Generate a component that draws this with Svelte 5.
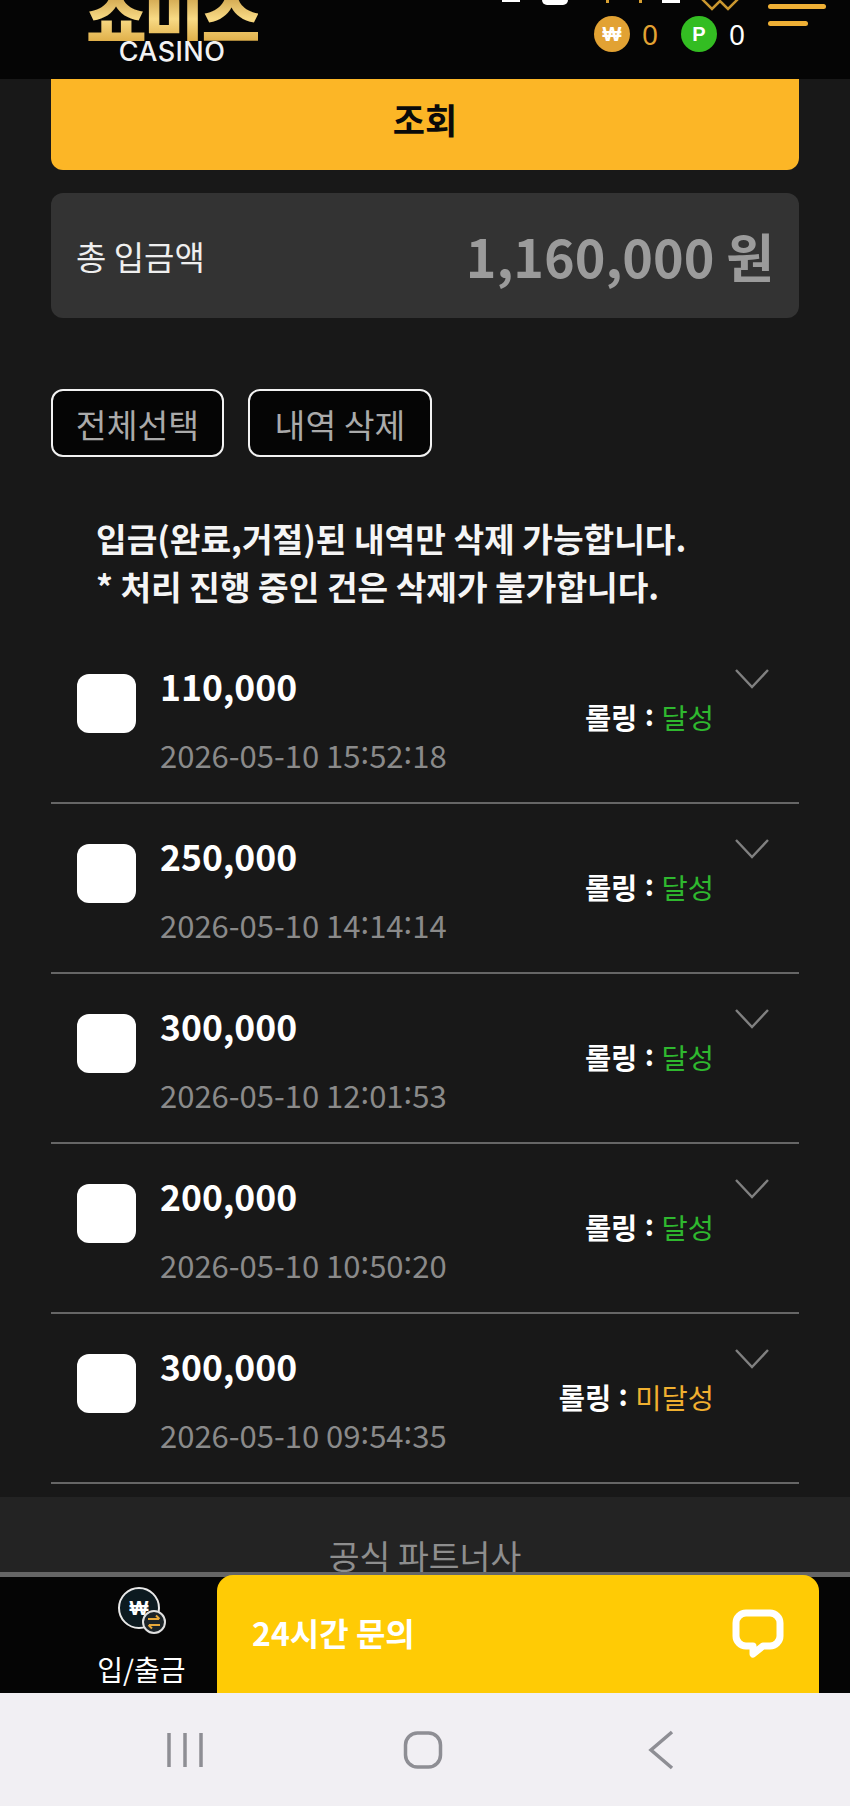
<script>
  const rows = [
    { amount: '110,000', date: ['2026-05-10 15', '52', '18'], status: '달성', done: true },
    { amount: '250,000', date: ['2026-05-10 14', '14', '14'], status: '달성', done: true },
    { amount: '300,000', date: ['2026-05-10 12', '01', '53'], status: '달성', done: true },
    { amount: '200,000', date: ['2026-05-10 10', '50', '20'], status: '달성', done: true },
    { amount: '300,000', date: ['2026-05-10 09', '54', '35'], status: '미달성', done: false }
  ];
</script>

<div class="page">
  <header class="header">
    <div class="logo">
      <div class="logo-mark">쇼미스</div>
      <div class="logo-sub">CASINO</div>
    </div>
    <div class="balances">
      <div class="clipped">
        <span class="clip-box"></span>
        <span class="clip-dot"></span>
        <span class="clip-tick"></span>
        <span class="clip-tick"></span>
        <span class="clip-box small"></span>
        <svg class="crown" width="40" height="12" viewBox="0 0 40 12"><path d="M2 0l10 10 8-8 8 8 10-10" fill="none" stroke="#c9962f" stroke-width="2.5"/></svg>
      </div>
      <div class="coins">
        <span class="coin won">₩</span><span class="num gold">0</span>
        <span class="coin point">P</span><span class="num">0</span>
      </div>
    </div>
    <div class="burger"><i class="long"></i><i class="short"></i></div>
  </header>

  <main class="main">
    <button class="search">조회</button>
    <section class="total">
      <span class="total-label">총 입금액</span>
      <span class="total-value">1,160,000 원</span>
    </section>
    <div class="actions">
      <button class="outline first">전체선택</button>
      <button class="outline second">내역 삭제</button>
    </div>
    <p class="note">입금(완료,거절)된 내역만 삭제 가능합니다.<br />* 처리 진행 중인 건은 삭제가 불가합니다.</p>
    <ul class="list">
      {#each rows as r}
        <li class="row">
          <span class="check"></span>
          <div class="info">
            <div class="amount">{r.amount}</div>
            <div class="date">{r.date[0]}<span class="colon">:</span>{r.date[1]}<span class="colon">:</span>{r.date[2]}</div>
          </div>
          <div class="roll">롤링 <span class="sep">:</span> <span class:ok={r.done} class:no={!r.done}>{r.status}</span></div>
          <svg class="chev" width="34" height="20" viewBox="0 0 34 20"><path d="M1 1l16 17L33 1" fill="none" stroke="#808080" stroke-width="2.4"/></svg>
        </li>
      {/each}
    </ul>
  </main>

  <section class="partner"><span>공식 파트너사</span></section>

  <nav class="bottom">
    <div class="bank">
      <svg width="50" height="50" viewBox="0 0 50 50">
        <circle cx="22" cy="22" r="20" fill="#0c1a20" stroke="#e8e8e8" stroke-width="2"/>
        <text x="22" y="29" text-anchor="middle" font-size="20" font-weight="700" fill="#fff" font-family="Liberation Sans">₩</text>
        <circle cx="37" cy="36" r="11" fill="#1c2428" stroke="#e0e0e0" stroke-width="2"/>
        <path d="M31 33h11M39 29.5l3.5 3.5M43 39H32M35 42.5L31.5 39" fill="none" stroke="#e8a93a" stroke-width="2"/>
      </svg>
      <span>입/출금</span>
    </div>
    <div class="contact">
      <span>24시간 문의</span>
      <svg width="52" height="50" viewBox="0 0 52 50"><path d="M14 4h24a10 10 0 0 1 10 10v13a10 10 0 0 1-10 10H31l-10 8v-8h-7A10 10 0 0 1 4 27V14A10 10 0 0 1 14 4z" fill="none" stroke="#fff" stroke-width="7" stroke-linejoin="round"/></svg>
    </div>
  </nav>

  <div class="system">
    <svg width="36" height="36" viewBox="0 0 36 36"><path d="M2 1v34M18 1v34M34 1v34" stroke="#8e8e94" stroke-width="3.5" fill="none"/></svg>
    <svg class="home" width="40" height="38" viewBox="0 0 40 38"><rect x="2.5" y="2" width="35" height="34" rx="12" fill="none" stroke="#8e8e94" stroke-width="3.5"/></svg>
    <svg width="28" height="40" viewBox="0 0 28 40"><path d="M25 2L4 20l21 18" stroke="#8e8e94" stroke-width="3.5" fill="none"/></svg>
  </div>
</div>

<style>
  :global(body) {
    margin: 0;
    background: #181818;
  }
  .page {
    width: 850px;
    height: 1806px;
    display: flex;
    flex-direction: column;
    overflow: hidden;
    background: #181818;
    font-family: "Noto Sans CJK KR", "Noto Sans", sans-serif;
    color: #fff;
  }
  button {
    font-family: inherit;
    cursor: pointer;
  }
  .header {
    height: 79px;
    flex: none;
    background: #050505;
    display: flex;
    position: relative;
    overflow: hidden;
  }
  .logo {
    position: absolute;
    left: 86px;
    bottom: 16px;
    width: 172px;
    text-align: center;
  }
  .logo-mark {
    font-size: 66px;
    font-weight: 900;
    line-height: 58px;
    letter-spacing: -3px;
    background: linear-gradient(180deg, #b8862c 0%, #f8da85 62%, #e0b04a 100%);
    -webkit-background-clip: text;
    background-clip: text;
    color: transparent;
    white-space: nowrap;
  }
  .logo-sub {
    font-family: Inter, sans-serif;
    font-size: 27px;
    font-weight: 500;
    letter-spacing: 0.4px;
    line-height: 22px;
    color: #f2f2f2;
  }
  .balances {
    position: absolute;
    left: 502px;
    top: 0;
    width: 250px;
  }
  .clipped {
    height: 16px;
    position: relative;
  }
  .clipped span, .crown {
    position: absolute;
    top: 0;
  }
  .clip-box {
    left: 0;
    width: 18px;
    height: 2px;
    background: #fff;
  }
  .clip-box.small {
    left: 160px;
    width: 18px;
    height: 3px;
  }
  .clip-dot {
    left: 40px;
    width: 26px;
    height: 5px;
    border-radius: 0 0 13px 13px;
    background: #fff;
  }
  .clip-tick {
    left: 104px;
    width: 3px;
    height: 3px;
    background: #d8a032;
  }
  .clip-tick + .clip-tick {
    left: 137px;
  }
  .crown {
    left: 198px;
    top: -1px;
  }
  .coins {
    display: flex;
    align-items: center;
    padding-left: 92px;
  }
  .coin {
    width: 36px;
    height: 36px;
    border-radius: 50%;
    display: flex;
    align-items: center;
    justify-content: center;
    font-size: 20px;
    font-weight: 700;
    font-family: "Liberation Sans", sans-serif;
    color: #fff;
  }
  .won {
    background: #e2a233;
  }
  .point {
    background: #33bd22;
    margin-left: 23px;
  }
  .num {
    font-size: 28px;
    line-height: 36px;
    margin-left: 12px;
    color: #fff;
    font-family: "Noto Sans", sans-serif;
  }
  .num.gold {
    color: #e2a233;
  }
  .burger i {
    display: block;
    position: absolute;
    left: 768px;
    height: 5px;
    border-radius: 2.5px;
    background: #efb035;
  }
  .long {
    top: 4px;
    width: 58px;
  }
  .short {
    top: 21px;
    width: 40px;
  }
  .main {
    padding: 0 51px;
    flex: none;
    height: 1418px;
  }
  .search {
    display: block;
    width: 748px;
    height: 91px;
    border: none;
    border-radius: 0 0 12px 12px;
    background: #fcb626;
    color: #0a0a0a;
    font-size: 35px;
    font-weight: 700;
    padding: 0 0 12px;
  }
  .total {
    margin-top: 23px;
    height: 125px;
    border-radius: 12px;
    background: #333333;
    display: flex;
    align-items: center;
    justify-content: space-between;
    padding: 0 25px;
  }
  .total-label {
    font-size: 33px;
    color: #efefef;
  }
  .total-value {
    font-size: 52px;
    font-weight: 700;
    color: #9b9b9b;
  }
  .actions {
    display: flex;
    gap: 24px;
    margin-top: 71px;
  }
  .outline {
    height: 68px;
    background: #050505;
    border: 2px solid #f2f2f2;
    border-radius: 12px;
    color: #aaaaaa;
    font-size: 33.5px;
    padding: 0;
  }
  .first {
    width: 173px;
  }
  .second {
    width: 184px;
  }
  .note {
    margin: 57px 0 0 45px;
    font-size: 33.3px;
    font-weight: 700;
    line-height: 48px;
    color: #f5f5f5;
  }
  .list {
    list-style: none;
    margin: 24px 0 0;
    padding: 0;
  }
  .row {
    height: 168px;
    border-bottom: 2px solid #666;
    position: relative;
    display: flex;
    align-items: center;
    padding-left: 26px;
  }
  .check {
    width: 59px;
    height: 59px;
    border-radius: 12px;
    background: #fff;
    margin-top: -30px;
  }
  .info {
    margin-left: 24px;
    margin-top: 1px;
  }
  .amount {
    font-size: 35.5px;
    font-weight: 700;
    line-height: 50px;
  }
  .date {
    font-size: 31px;
    line-height: 42px;
    margin-top: 19px;
    color: #8a8a8a;
  }
  .colon {
    vertical-align: 4px;
  }
  .roll {
    position: absolute;
    right: 85px;
    top: 50%;
    margin-top: -24px;
    font-size: 28.5px;
    font-weight: 700;
    line-height: 40px;
  }
  .roll span {
    font-weight: 400;
  }
  .roll .sep {
    font-weight: 700;
    vertical-align: 3px;
    margin: 0 1px;
  }
  .ok {
    color: #2fb82f;
  }
  .no {
    color: #f0b030;
  }
  .chev {
    position: absolute;
    right: 30px;
    top: 35px;
  }
  .partner {
    height: 75px;
    flex: none;
    background: #232323;
    display: flex;
    justify-content: center;
    align-items: flex-end;
    font-size: 33.5px;
    color: #8e8e8e;
  }
  .partner span {
    line-height: 42px;
    margin-bottom: -4px;
  }
  .bottom {
    height: 121px;
    flex: none;
    background: #050505;
    border-top: 5px solid #666;
    box-sizing: border-box;
    display: flex;
    position: relative;
  }
  .bank {
    width: 217px;
    flex: none;
    display: flex;
    flex-direction: column;
    align-items: center;
    box-sizing: border-box;
    padding: 9px 0 0 66px;
    font-size: 28px;
    white-space: nowrap;
  }
  .bank span {
    line-height: 38px;
    margin-top: 14px;
  }
  .contact {
    width: 602px;
    height: 118px;
    margin-top: -2px;
    border-radius: 16px 16px 0 0;
    background: #ffcb05;
    display: flex;
    align-items: center;
    justify-content: space-between;
    box-sizing: border-box;
    padding: 0 35px 0 35px;
    font-size: 32px;
    font-weight: 700;
  }
  .contact span {
    margin-top: -5px;
  }
  .system {
    flex: 1;
    background: #f1eff3;
    display: flex;
    align-items: center;
    justify-content: space-between;
    padding: 0 175px 0 167px;
  }
  .home {
    margin-right: 4px;
  }
</style>
